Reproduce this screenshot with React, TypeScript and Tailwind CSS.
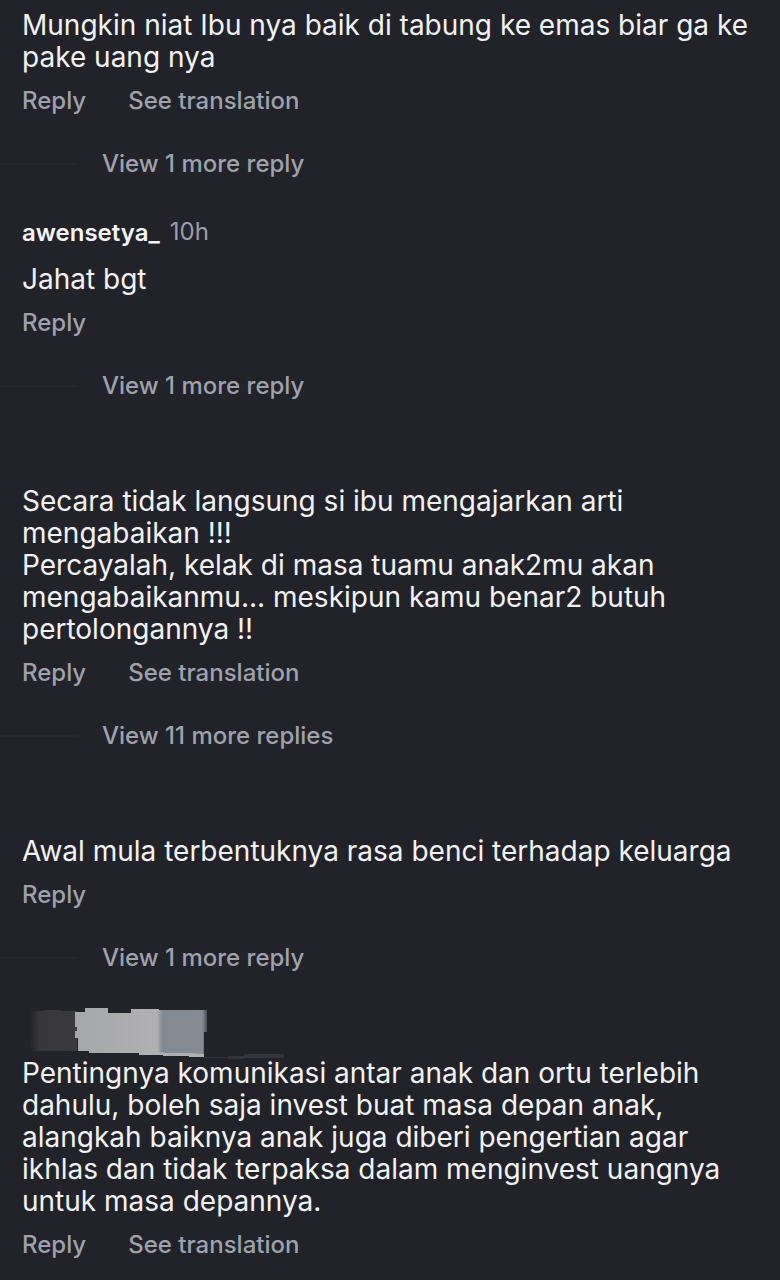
type CommentData = {
  user?: string
  time?: string
  hidden?: boolean
  text: string
  translate?: boolean
  more?: string
}

const comments: CommentData[] = [
  {
    text: 'Mungkin niat Ibu nya baik di tabung ke emas biar ga ke\npake uang nya',
    translate: true,
    more: 'View 1 more reply',
  },
  {
    user: 'awensetya_',
    time: '10h',
    text: 'Jahat bgt',
    more: 'View 1 more reply',
  },
  {
    text: 'Secara tidak langsung si ibu mengajarkan arti\nmengabaikan !!!\nPercayalah, kelak di masa tuamu anak2mu akan\nmengabaikanmu... meskipun kamu benar2 butuh\npertolongannya !!',
    translate: true,
    more: 'View 11 more replies',
  },
  {
    text: 'Awal mula terbentuknya rasa benci terhadap keluarga',
    more: 'View 1 more reply',
  },
  {
    hidden: true,
    text: 'Pentingnya komunikasi antar anak dan ortu terlebih\ndahulu, boleh saja invest buat masa depan anak,\nalangkah baiknya anak juga diberi pengertian agar\nikhlas dan tidak terpaksa dalam menginvest uangnya\nuntuk masa depannya.',
    translate: true,
  },
]

// smeared-out user name
const Smudge = () => {
  return (
    <svg className="absolute top-0 left-0" width="270" height="52" viewBox="0 0 270 52" aria-hidden="true">
      <defs>
        <linearGradient id="dark" x1="0" x2="1">
          <stop offset="0" stopColor="#222328" />
          <stop offset="0.2" stopColor="#37373b" />
          <stop offset="1" stopColor="#3a3a3e" />
        </linearGradient>
        <linearGradient id="light" x1="0" x2="1">
          <stop offset="0" stopColor="#a6a7a9" />
          <stop offset="1" stopColor="#b1b1b4" />
        </linearGradient>
        <linearGradient id="blue" x1="0" x2="1">
          <stop offset="0" stopColor="#a3a7ad" />
          <stop offset="0.1" stopColor="#838992" />
          <stop offset="0.9" stopColor="#858c95" />
          <stop offset="1" stopColor="#4b5057" />
        </linearGradient>
      </defs>
      <path d="M8 4h12l2-1h16l2 1h15v40H10l-2-8z" fill="url(#dark)" />
      <path d="M53 5h10V1h23v5h23V2h28v46h-20v-2H67v-2H56V31h-3v-7h2v-4h-2z" fill="url(#light)" />
      <path d="M136 3h49v22h-3v23h-46z" fill="url(#blue)" />
      <path d="M118 45h18l8 1h24l14 1v3h-15v-1h-26v-1h-23z" fill="#adb0b4" />
      <path d="M182 50h24v-1h16v-2h40v4h-40v1h-16v-1h-24z" fill="#34353a" />
    </svg>
  )
}

const Comment = ({ user, time, hidden, text, translate, more }: CommentData) => {
  return (
    <article className="flex flex-col">
      <header className="mb-[14px] flex h-8 items-center gap-2.5 px-[22px]">
        {user && <h3 className="text-2xl leading-8 font-semibold text-[#f3f4f7]">{user}</h3>}
        {time && <time className="pb-0.5 text-2xl leading-7 text-[#9b9ea9]">{time}</time>}
        {hidden && (
          <div className="relative h-10">
            <Smudge />
          </div>
        )}
      </header>
      <p className="px-[22px] text-[28px] leading-8 whitespace-pre-line text-[#f1f2f5]">{text}</p>
      <div className="mt-3 flex gap-[42px] px-[22px] text-2xl leading-8 font-medium text-[#9fa2ad]">
        <button type="button">Reply</button>
        {translate && <button type="button">See translation</button>}
      </div>
      {more && (
        <div className="mt-[31px] mb-[37px] flex items-center gap-6">
          <span className="h-0.5 w-[78px] bg-[#27282d]" />
          <button type="button" className="text-2xl leading-8 font-medium text-[#9fa2ad]">
            {more}
          </button>
        </div>
      )}
    </article>
  )
}

export default function App() {
  return (
    <main className="min-h-screen overflow-hidden bg-[#222328] font-['Inter',sans-serif]">
      <div className="-mt-[37px] pb-[18px]">
        {comments.map((comment) => (
          <Comment key={comment.text} {...comment} />
        ))}
      </div>
    </main>
  )
}
